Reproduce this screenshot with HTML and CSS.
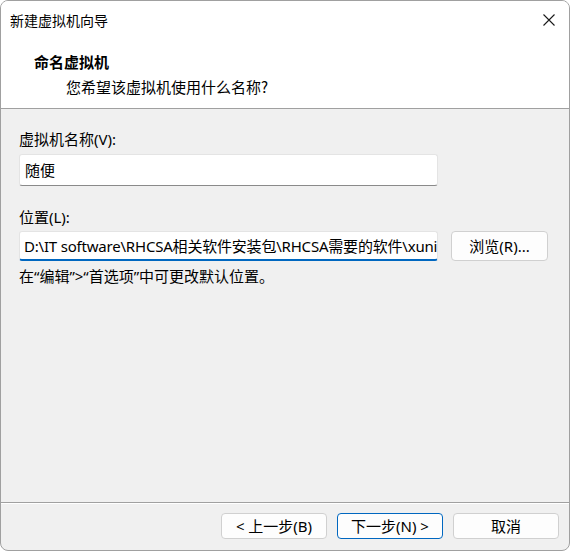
FILE: index.html
```html
<!DOCTYPE html>
<html lang="zh-CN">
<head>
<meta charset="utf-8">
<title>新建虚拟机向导</title>
<link rel="stylesheet" href="styles.css">
</head>
<body>
<div class="window">
  <div class="titlebar">
    <span class="title">新建虚拟机向导</span>
    <span class="close">
      <svg width="12" height="12" viewBox="0 0 12 12"><path d="M0.5 0.5 L11.5 11.5 M11.5 0.5 L0.5 11.5" stroke="#1a1a1a" stroke-width="1.1" fill="none"/></svg>
    </span>
  </div>
  <div class="header">
    <div class="h-title">命名虚拟机</div>
    <div class="h-sub">您希望该虚拟机使用什么名称?</div>
  </div>
  <div class="content">
    <div class="label">虚拟机名称(V):</div>
    <div class="field field-name"><span class="value">随便</span></div>
    <div class="label label-loc">位置(L):</div>
    <div class="row">
      <div class="field field-loc"><span class="value value-loc">D:\IT software\RHCSA相关软件安装包\RHCSA需要的软件\xuni</span></div>
      <div class="btn btn-browse">浏览(R)...</div>
    </div>
    <div class="hint">在“编辑”&gt;“首选项”中可更改默认位置。</div>
  </div>
  <div class="footer">
    <div class="btn">&lt; 上一步(B)</div>
    <div class="btn btn-default">下一步(N) &gt;</div>
    <div class="btn">取消</div>
  </div>
</div>
</body>
</html>
```
FILE: styles.css
```css
html, body {
  margin: 0;
  padding: 0;
  background: #ffffff;
}
body {
  font-family: "Noto Sans", "Noto Sans CJK SC", sans-serif;
  font-size: 15px;
  color: #000000;
}
.window {
  width: 570px;
  height: 551px;
  box-sizing: border-box;
  border: 1px solid #a0a0a0;
  border-radius: 8px;
  overflow: hidden;
  display: flex;
  flex-direction: column;
  background: #f0f0f0;
}
.titlebar {
  height: 37px;
  flex: none;
  background: #ffffff;
  display: flex;
  align-items: center;
  justify-content: space-between;
  padding-left: 9px;
  padding-right: 14px;
}
.title {
  font-family: "Noto Sans CJK SC", sans-serif;
  font-size: 14px;
  line-height: 20px;
}
.close {
  display: flex;
  width: 12px;
  height: 12px;
}
.header {
  flex: none;
  height: 71px;
  box-sizing: border-box;
  background: #ffffff;
  border-bottom: 1px solid #a0a0a0;
  padding-left: 33px;
  padding-top: 14px;
}
.h-title {
  font-family: "Noto Sans CJK SC", sans-serif;
  font-weight: bold;
  font-size: 15px;
  line-height: 20px;
}
.h-sub {
  font-family: "Noto Sans CJK SC", sans-serif;
  font-size: 15px;
  line-height: 20px;
  padding-left: 32px;
  margin-top: 5px;
}
.content {
  flex: 1;
  padding: 20px 0 0 18px;
}
.label {
  line-height: 20px;
  height: 20px;
}
.label-loc {
  margin-top: 21px;
}
.field {
  width: 419px;
  box-sizing: border-box;
  background: #ffffff;
  border: 1px solid #e4e4e4;
  border-bottom: 1px solid #8a8a8a;
  border-radius: 3px;
  display: flex;
  align-items: center;
  overflow: hidden;
  white-space: nowrap;
}
.field-name {
  height: 32px;
  margin-top: 5px;
  padding-left: 5px;
}
.row {
  display: flex;
  align-items: flex-start;
  gap: 13px;
  margin-top: 4px;
}
.field-loc {
  height: 30px;
  padding-left: 4px;
  border-bottom: 2px solid #0067c0;
}
.value {
  line-height: 20px;
}
.value-loc {
  letter-spacing: -0.2px;
}
.hint {
  margin-top: 5px;
  line-height: 20px;
}
.btn {
  box-sizing: border-box;
  width: 106px;
  height: 26px;
  background: #fdfdfd;
  border: 1px solid #d0d0d0;
  border-radius: 4px;
  display: flex;
  align-items: center;
  justify-content: center;
  line-height: 20px;
}
.btn-browse {
  width: 97px;
  height: 30px;
}
.btn-default {
  border-color: #0067c0;
}
.footer {
  flex: none;
  height: 48px;
  box-sizing: border-box;
  border-top: 1px solid #a0a0a0;
  box-shadow: inset 0 1px 0 #ffffff;
  display: flex;
  justify-content: flex-end;
  align-items: flex-start;
  gap: 10px;
  padding-top: 10px;
  padding-right: 10px;
}
```
